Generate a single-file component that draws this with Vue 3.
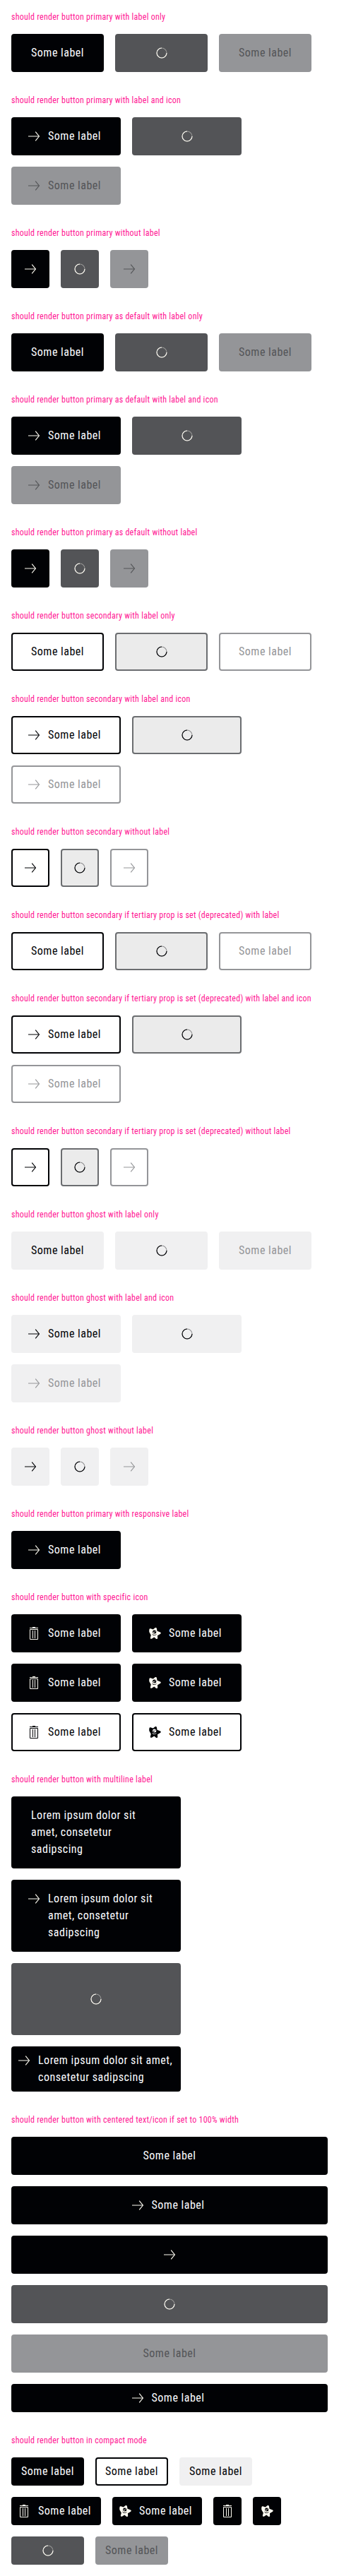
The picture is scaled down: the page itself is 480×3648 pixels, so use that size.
<script setup>
import { h } from 'vue'

const svg = (cls, kids) => h('svg', { class: ['icon', cls], viewBox: '0 0 24 24', width: 24, height: 24, 'aria-hidden': 'true' }, kids)

const line = { fill: 'none', stroke: 'currentColor', 'stroke-width': 1 }
const glyphs = {
  arrow: () => svg('arrow', [
    h('path', { d: 'M4 12H19.5', ...line }),
    h('path', { d: 'M14.2 5.7L19.4 12L14.2 18.3', ...line, 'stroke-width': 1.15 }),
  ]),
  trash: () => svg('trash', [
    h('path', { d: 'M6.5 6.5H17.5V20.5H6.5Z', ...line }),
    h('path', { d: 'M6 4.5H18', ...line }),
    h('path', { d: 'M10 3.5H14', ...line }),
    h('path', { d: 'M10.5 8V19M13.5 8V19', ...line }),
  ]),
  star: () => svg('star', [
    h('path', {
      fill: 'currentColor',
      'fill-rule': 'evenodd',
      d: 'M4.4 6.4C4.7 5.4 5.6 5.1 6.8 5.6L9.8 6.4L12.5 4.3C13.8 3.6 14.8 4.2 15 5.4L15.5 8.8L19.9 10.4C21.2 11 21 12.3 19.8 13L16 15.2L16.2 18.8C16 20.2 14.6 20.4 13.6 19.4L11.3 17.4L8.2 19.6C6.8 20.3 5.6 19.6 5.9 18.2L6.8 14.6L4.6 10.7C4 9.2 4.2 8 4.4 6.4ZM11.7 7.6A2.6 2.5 0 1 0 11.7 12.6A2.6 2.5 0 1 0 11.7 7.6ZM8.1 12.4C9 15.6 13.4 16 15 12.8C13.2 14.8 10 14.6 8.1 12.4Z',
    }),
    h('circle', { cx: 10.8, cy: 10.6, r: 0.9, fill: 'currentColor' }),
    h('circle', { cx: 12.9, cy: 9.2, r: 0.6, fill: 'currentColor' }),
  ]),
}

const Icon = (props) => glyphs[props.name]()
Icon.props = ['name']

const label = 'Some label'
const lorem = 'Lorem ipsum dolor sit amet, consetetur sadipscing'

const labelOnly = (t) => [{ t, label }, { t, label, loading: true }, { t, label, disabled: true }]
const withIcon = (t) => labelOnly(t).map((b) => ({ ...b, icon: 'arrow' }))
const iconOnly = (t) => withIcon(t).map((b) => ({ ...b, label: '' }))

const variants = [
  ['primary', 'primary', 'with label only'],
  ['primary as default', 'primary', 'with label only'],
  ['secondary', 'secondary', 'with label only'],
  ['secondary if tertiary prop is set (deprecated)', 'secondary', 'with label'],
  ['ghost', 'ghost', 'with label only'],
]

const sections = [
  ...variants.flatMap(([name, t, first]) => [
    { title: `should render button ${name} ${first}`, buttons: labelOnly(t) },
    { title: `should render button ${name} with label and icon`, buttons: withIcon(t) },
    { title: `should render button ${name} without label`, buttons: iconOnly(t) },
  ]),
  { title: 'should render button primary with responsive label', buttons: [{ t: 'primary', label, icon: 'arrow' }] },
  {
    title: 'should render button with specific icon',
    buttons: ['primary', 'primary', 'secondary'].flatMap((t) => [{ t, label, icon: 'trash' }, { t, label, icon: 'star' }]),
  },
  {
    title: 'should render button with multiline label',
    kind: 'multiline',
    buttons: [
      { t: 'primary', label: lorem },
      { t: 'primary', label: lorem, icon: 'arrow' },
      { t: 'primary', label: lorem, icon: 'arrow', loading: true },
      { t: 'primary', label: lorem, icon: 'arrow', compact: true },
    ],
  },
  {
    title: 'should render button with centered text/icon if set to 100% width',
    kind: 'full',
    buttons: [
      { t: 'primary', label },
      { t: 'primary', label, icon: 'arrow' },
      { t: 'primary', label: '', icon: 'arrow' },
      { t: 'primary', label, loading: true },
      { t: 'primary', label, disabled: true },
      { t: 'primary', label, icon: 'arrow', compact: true },
    ],
  },
  {
    title: 'should render button in compact mode',
    buttons: [
      { t: 'primary', label },
      { t: 'secondary', label },
      { t: 'ghost', label },
      { t: 'primary', label, icon: 'trash' },
      { t: 'primary', label, icon: 'star' },
      { t: 'primary', label: '', icon: 'trash' },
      { t: 'primary', label: '', icon: 'star' },
      { t: 'primary', label, loading: true },
      { t: 'primary', label, disabled: true },
    ].map((b) => ({ ...b, compact: true })),
  },
]

const classes = (b) => [
  'btn',
  b.t,
  { loading: b.loading, disabled: b.disabled, compact: b.compact, 'has-icon': b.icon, 'icon-only': !b.label },
]
</script>

<template>
  <main class="page">
    <section v-for="s in sections" :key="s.title" class="section" :class="s.kind">
      <h2 class="title">{{ s.title }}</h2>
      <div class="row">
        <button v-for="(b, i) in s.buttons" :key="i" type="button" :class="classes(b)">
          <Icon v-if="b.icon" :name="b.icon" />
          <span v-if="b.label" class="label">{{ b.label }}</span>
          <svg v-if="b.loading" class="spinner" viewBox="0 0 24 24" width="24" height="24" aria-hidden="true">
            <circle class="track" cx="12" cy="12" r="7" />
            <path class="arc" d="M12 5A7 7 0 1 0 19 12" />
          </svg>
        </button>
      </div>
    </section>
  </main>
</template>

<style>
body {
  margin: 0;
  background: #fff;
}
</style>

<style scoped>
.page {
  font-family: "Roboto Condensed", Roboto, "Liberation Sans", sans-serif;
}
.section {
  padding: 16px;
}
.title {
  margin: 0 0 16px;
  font-size: 12px;
  line-height: 16px;
  font-weight: 400;
  letter-spacing: 0.25px;
  color: #ff1493;
  white-space: nowrap;
}
.row {
  display: flex;
  flex-wrap: wrap;
  gap: 16px;
}
.btn {
  position: relative;
  box-sizing: border-box;
  display: flex;
  align-items: flex-start;
  justify-content: center;
  gap: 8px;
  margin: 0;
  padding: 13px 26px;
  border: 2px solid #010205;
  border-radius: 4px;
  font: 400 16px/24px "Roboto Condensed", Roboto, "Liberation Sans", sans-serif;
  letter-spacing: 0.5px;
  text-align: left;
  color: #fbfcff;
  background: #010205;
}
.btn.has-icon {
  padding-left: 18px;
}
.btn.icon-only {
  padding: 13px;
}
.btn.compact {
  padding: 6px 12px;
}
.btn.compact.has-icon {
  padding-left: 4px;
}
.btn.compact.icon-only {
  padding: 6px;
}
.label {
  min-width: 75px;
}
.icon,
.spinner {
  display: block;
  flex: none;
}
.primary .icon,
.primary .spinner {
  color: #fdfbf2;
}
.primary.loading {
  background: #535457;
  border-color: #535457;
}
.primary.disabled {
  color: #535457;
  background: #949598;
  border-color: #949598;
}
.primary.disabled .icon {
  color: #535457;
}
.secondary {
  color: #010205;
  background: #fff;
}
.secondary.loading {
  background: #ebebeb;
  border-color: #6b6d70;
}
.secondary.disabled {
  color: #949598;
  border-color: #949598;
}
.ghost {
  color: #010205;
  background: #f0f0f1;
  border-color: #f0f0f1;
}
.ghost.disabled {
  color: #949598;
}
.loading .label,
.loading .icon {
  visibility: hidden;
}
.spinner {
  position: absolute;
  inset: 0;
  margin: auto;
  fill: none;
  stroke: currentColor;
  stroke-width: 1.1;
}
.track {
  opacity: 0.4;
}
.multiline .row,
.full .row {
  flex-direction: column;
}
.multiline .btn {
  width: 240px;
  justify-content: flex-start;
}
.multiline .btn.compact {
  padding-right: 6px;
}
</style>
